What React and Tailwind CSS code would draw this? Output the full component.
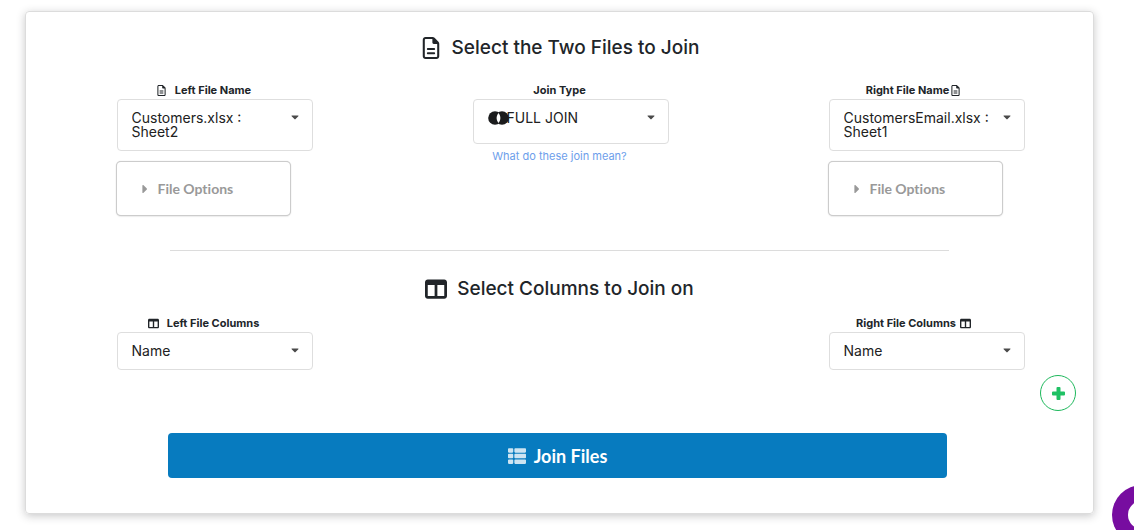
import React, { useState } from "react";
import { FaRegFileLines, FaTableColumns } from "react-icons/fa6";
import { FaCaretDown, FaCaretRight, FaThList } from "react-icons/fa";

// Two filled circles with the overlap cut out in white
function FullJoinIcon({ className }) {
  return (
    <svg viewBox="0 0 21 14" className={className} aria-hidden="true">
      <circle cx="7" cy="7" r="6.8" fill="#1b1c1d" />
      <circle cx="14" cy="7" r="6.8" fill="#1b1c1d" />
      <path d="M10.5 2C8 5 8 9 10.5 12C13 9 13 5 10.5 2Z" fill="#fff" />
    </svg>
  );
}

function PlusIcon({ className }) {
  return (
    <svg viewBox="0 0 13 13" className={className} aria-hidden="true">
      <path
        d="M5.5 0h2q1 0 1 1v3.5H12q1 0 1 1v2q0 1-1 1H8.500V12q0 1-1 1h-2q-1 0-1-1V8.500H1q-1 0-1-1v-2q0-1 1-1h3.500V1q0-1 1-1z"
        fill="currentColor"
      />
    </svg>
  );
}

function Dropdown({ id, options, className }) {
  const [value, setValue] = useState(options[0]);
  return (
    <div className="relative w-[196px]">
      <select
        id={id}
        value={value}
        onChange={(e) => setValue(e.target.value)}
        className={`block w-full appearance-none rounded border border-[#dedede] bg-white pr-6 text-sm leading-[14px] whitespace-normal text-[#212121] ${className}`}
      >
        {options.map((o) => (
          <option key={o}>{o}</option>
        ))}
      </select>
      <FaCaretDown className="pointer-events-none absolute top-3 right-3 size-3 text-[#4a4a4a]" />
    </div>
  );
}

function Column({ children }) {
  return (
    <div className="flex flex-col items-center">
      <div className="w-[174px]">{children}</div>
    </div>
  );
}

function Label({ htmlFor, children }) {
  return (
    <label
      htmlFor={htmlFor}
      className="mb-0.5 flex h-3.5 items-center justify-center pt-px text-[11px] font-bold whitespace-nowrap"
    >
      {children}
    </label>
  );
}

function FileOptions() {
  return (
    <button
      type="button"
      className="mt-[11px] flex h-[53px] w-[173px] items-center rounded-sm bg-white pl-[21px] font-[Lato,sans-serif] text-sm font-bold text-[#999] shadow-[0_1px_2px_0_#ccc,0_0_0_1px_#ccc,0_0_1px_1px_#ccc] [font-variant-ligatures:none]"
    >
      <FaCaretRight className="mr-1.5 size-3.5" />
      File Options
    </button>
  );
}

export default function App() {
  return (
    <div className="min-h-screen bg-white pt-[11px] pr-10 pb-4 pl-[25px] font-[Inter,sans-serif] text-[#212529]">
      <main className="rounded border border-[#dcdcdc] pt-6 pb-[35px] shadow-[0_2px_8px_0_rgba(34,36,38,0.25)]">
        <h1 className="flex h-6 items-center justify-center text-[19px] font-medium">
          <FaRegFileLines className="mr-2.5 size-[22px]" />
          Select the Two Files to Join
        </h1>

        <div className="mt-[23px] grid grid-cols-3 gap-x-px">
          <Column>
            <Label htmlFor="left-file">
              <FaRegFileLines className="mr-2 size-[11px]" />
              Left File Name
            </Label>
            <Dropdown
              id="left-file"
              className="h-[52px] pl-3.5"
              options={["Customers.xlsx : Sheet2", "CustomersEmail.xlsx : Sheet1"]}
            />
            <FileOptions />
          </Column>
          <Column>
            <Label htmlFor="join-type">Join Type</Label>
            <div className="relative">
              <Dropdown
                id="join-type"
                className="h-[45px] pb-2 pl-[33px]"
                options={["FULL JOIN", "INNER JOIN", "LEFT JOIN", "RIGHT JOIN"]}
              />
              <FullJoinIcon className="pointer-events-none absolute top-3 left-[15px] h-3.5 w-[21px]" />
            </div>
            <a
              href="#joins"
              className="mt-1 block text-center text-[11px] leading-4 text-[#6d9eeb]"
            >
              What do these join mean?
            </a>
          </Column>
          <Column>
            <Label htmlFor="right-file">
              Right File Name
              <FaRegFileLines className="mr-1 ml-px size-[11px]" />
            </Label>
            <Dropdown
              id="right-file"
              className="h-[52px] pl-3.5"
              options={["CustomersEmail.xlsx : Sheet1", "Customers.xlsx : Sheet2"]}
            />
            <FileOptions />
          </Column>
        </div>

        <hr className="mx-auto mt-[35px] w-[73%] border-[#dcdcdc]" />

        <h2 className="mt-[26px] flex h-6 items-center justify-center text-[19px] font-medium">
          <FaTableColumns className="mr-2.5 size-[22px]" />
          Select Columns to Join on
        </h2>

        <div className="mt-[15px] grid grid-cols-3 gap-x-px">
          <Column>
            <Label htmlFor="left-column">
              <FaTableColumns className="mr-2 size-[11px]" />
              Left File Columns
            </Label>
            <Dropdown
              id="left-column"
              className="h-[38px] pl-3.5"
              options={["Name", "Email"]}
            />
          </Column>
          <div />
          <Column>
            <Label htmlFor="right-column">
              Right File Columns
              <FaTableColumns className="mr-1 ml-1 size-[11px]" />
            </Label>
            <Dropdown
              id="right-column"
              className="h-[38px] pl-3.5"
              options={["Name", "Email"]}
            />
          </Column>
        </div>

        <div className="mt-[5px] flex justify-end pr-[17px]">
          <button
            type="button"
            aria-label="Add columns"
            className="flex size-9 items-center justify-center rounded-full border border-[#1eb85c] text-[#1fc164]"
          >
            <PlusIcon className="size-[13px]" />
          </button>
        </div>

        <div className="mt-[22px] mr-0.5 -ml-0.5 flex justify-center">
          <button
            type="button"
            className="flex h-[45px] w-[73%] items-center justify-center rounded bg-[#077bbf] font-[Lato,sans-serif] text-lg font-bold text-white"
          >
            <FaThList className="mr-2 size-[18px] opacity-80" />
            Join Files
          </button>
        </div>
      </main>

      {/* chat launcher */}
      <button
        type="button"
        aria-label="Open chat"
        className="fixed -right-[38px] -bottom-[15px] flex size-[60px] items-center justify-center rounded-full bg-[#770da0]"
      >
        <span className="size-7 rounded-full bg-white" />
      </button>
    </div>
  );
}
